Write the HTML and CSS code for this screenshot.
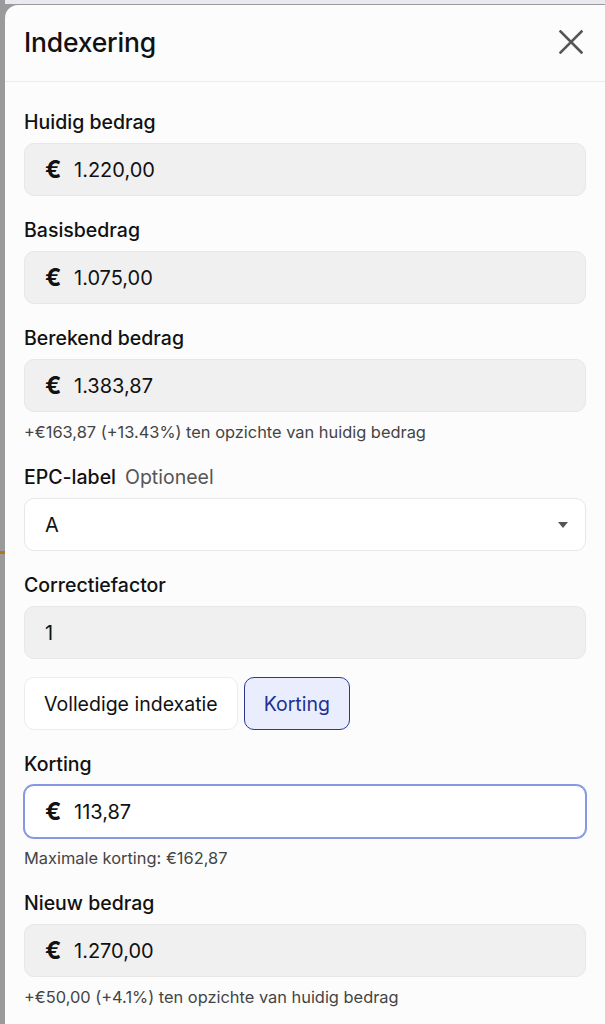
FILE: index.html
```html
<!DOCTYPE html>
<html lang="nl">
<head>
<meta charset="utf-8">
<title>Indexering</title>
<link rel="stylesheet" href="styles.css">
</head>
<body>
<div class="page">
  <div class="backdrop"></div>
  <div class="sheet-wrap">
    <section class="sheet">
      <header class="sheet-header">
        <h1 class="title">Indexering</h1>
        <button class="close" aria-label="Sluiten">
          <svg width="24" height="24" viewBox="0 0 24 24"><path d="M1.5 1.5 L22.5 22.5 M22.5 1.5 L1.5 22.5" stroke="#555" stroke-width="2.6" stroke-linecap="square" fill="none"/></svg>
        </button>
      </header>
      <div class="form">
        <div class="field">
          <label class="label">Huidig bedrag</label>
          <div class="input readonly"><span class="cur">€</span><span class="val">1.220,00</span></div>
        </div>
        <div class="field">
          <label class="label">Basisbedrag</label>
          <div class="input readonly"><span class="cur">€</span><span class="val">1.075,00</span></div>
        </div>
        <div class="field">
          <label class="label">Berekend bedrag</label>
          <div class="input readonly"><span class="cur">€</span><span class="val">1.383,87</span></div>
          <p class="help">+€163,87 (+13.43%) ten opzichte van huidig bedrag</p>
        </div>
        <div class="field">
          <label class="label">EPC-label <span class="opt">Optioneel</span></label>
          <div class="input select"><span class="val">A</span>
            <svg class="caret" width="10" height="6" viewBox="0 0 10 6"><path d="M0 0 H10 L5 6 Z" fill="#555"/></svg>
          </div>
        </div>
        <div class="field">
          <label class="label">Correctiefactor</label>
          <div class="input readonly"><span class="val plain">1</span></div>
        </div>
        <div class="toggle">
          <button class="tbtn">Volledige indexatie</button>
          <button class="tbtn active">Korting</button>
        </div>
        <div class="field">
          <label class="label">Korting</label>
          <div class="input focus"><span class="cur">€</span><span class="val">113,87</span></div>
          <p class="help">Maximale korting: €162,87</p>
        </div>
        <div class="field">
          <label class="label">Nieuw bedrag</label>
          <div class="input readonly"><span class="cur">€</span><span class="val">1.270,00</span></div>
          <p class="help">+€50,00 (+4.1%) ten opzichte van huidig bedrag</p>
        </div>
      </div>
    </section>
  </div>
</div>
</body>
</html>
```
FILE: styles.css
```css
* { box-sizing: border-box; }
html, body { margin: 0; padding: 0; }
body {
  width: 605px;
  height: 1024px;
  overflow: hidden;
  background: #9a9a9a;
  font-family: Inter, "Noto Sans", sans-serif;
  color: #111;
}
.page {
  display: flex;
  height: 1024px;
}
.backdrop {
  width: 5px;
  flex: none;
  background: linear-gradient(#9a9a9a 0 551px, #b27424 551px 554px, #9a9a9a 554px);
}
.sheet-wrap {
  flex: 1;
  padding-top: 5px;
  background: linear-gradient(#e9e9ef 0 4px, transparent 4px);
}
.sheet {
  background: #fcfcfc;
  border-top-left-radius: 13px;
  height: 100%;
}
.sheet-header {
  height: 77px;
  border-bottom: 1px solid #ebebeb;
  display: flex;
  align-items: center;
  justify-content: space-between;
  padding: 0 22px 0 19px;
}
.title {
  margin: 0;
  font-size: 26.5px;
  font-weight: 500;
  letter-spacing: -0.2px;
  padding-bottom: 2px;
}
.close {
  border: 0;
  background: none;
  padding: 0;
  width: 24px;
  height: 24px;
  display: flex;
  margin-bottom: 3px;
}
.form {
  padding: 28px 19px 0 19px;
  display: flex;
  flex-direction: column;
  gap: 22px;
}
.field {
  display: flex;
  flex-direction: column;
}
.label {
  font-size: 19.5px;
  line-height: 24px;
  font-weight: 500;
  margin-bottom: 9px;
  display: flex;
  gap: 9px;
}
.opt {
  font-weight: 400;
  color: #555;
}
.input {
  height: 53px;
  border: 1px solid #e7e7e7;
  border-radius: 10px;
  display: flex;
  align-items: center;
  padding: 0 20px;
  font-size: 20px;
  background: #fff;
}
.input.readonly { background: #f0f0f0; }
.input.focus {
  border: 1px solid #8499e6;
  box-shadow: 0 0 0 1px #8499e6;
}
.cur {
  font-weight: 700;
  font-size: 24px;
  width: 29px;
  flex: none;
}
.select { justify-content: space-between; padding-right: 17px; }
.caret { margin-top: 1px; }
.help {
  margin: 9px 0 0;
  font-size: 16.4px;
  line-height: 22px;
  color: #444;
}
.toggle {
  display: flex;
  gap: 6px;
  margin-top: -4px;
}
.tbtn {
  height: 53px;
  padding: 0 19px;
  border: 1px solid #ececec;
  border-radius: 10px;
  background: #fff;
  font-family: inherit;
  font-size: 19.5px;
  color: #111;
}
.tbtn.active {
  background: #e9edfd;
  border: 1.5px solid #2a3a92;
  color: #1f3190;
}
```
